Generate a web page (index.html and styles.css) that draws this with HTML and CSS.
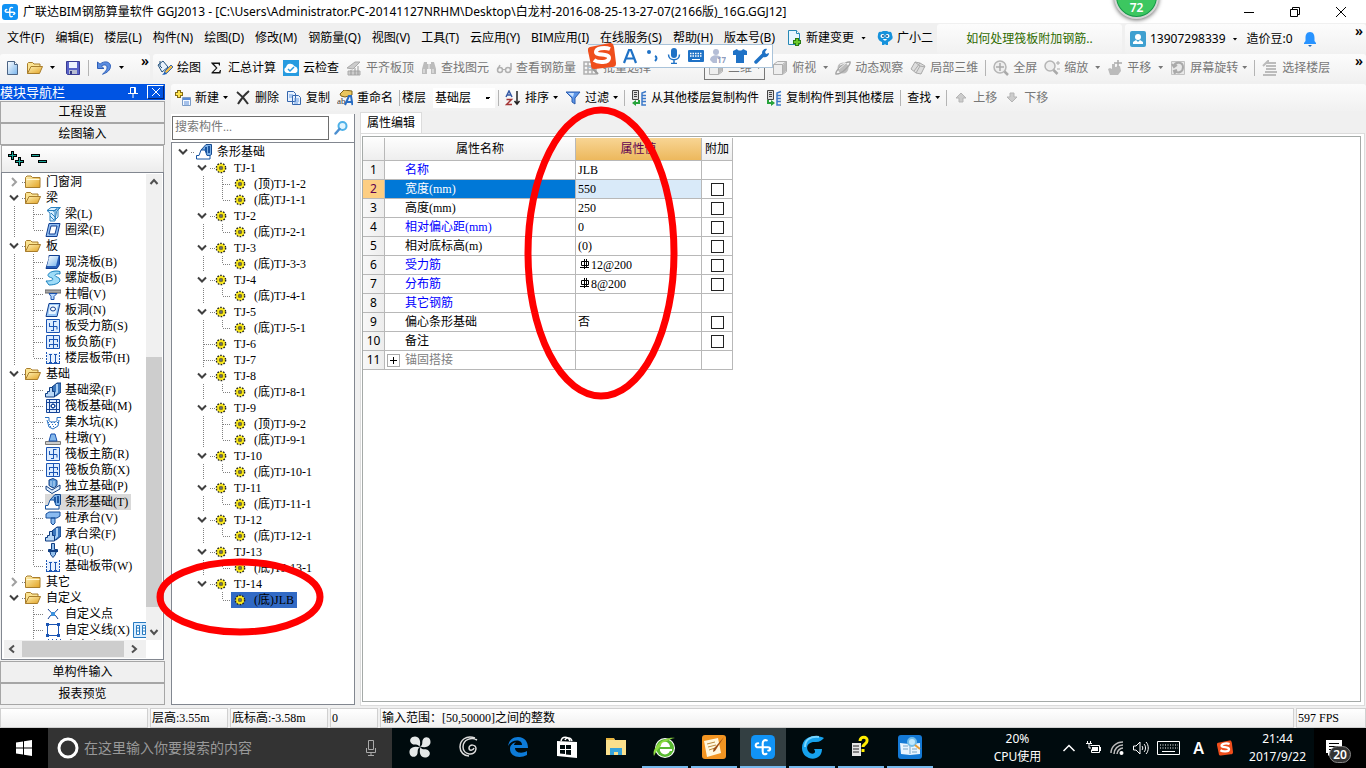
FILE: index.html
```html
<!DOCTYPE html>
<html lang="zh-CN">
<head>
<meta charset="utf-8">
<title>广联达BIM钢筋算量软件 GGJ2013</title>
<link rel="stylesheet" href="styles.css">
</head>
<body>
<svg class="defs" aria-hidden="true">
<defs>
<linearGradient id="gold" x1="0" y1="0" x2="1" y2="1"><stop offset="0" stop-color="#fff3b8"/><stop offset="1" stop-color="#e2a223"/></linearGradient>
<linearGradient id="blue" x1="0" y1="0" x2="1" y2="1"><stop offset="0" stop-color="#ffffff"/><stop offset="1" stop-color="#78b4ec"/></linearGradient>
<symbol id="chev" viewBox="0 0 12 16"><path d="M2 5.500l4 4 4-4" fill="none" stroke="#404040" stroke-width="2"/></symbol>
<symbol id="chevr" viewBox="0 0 12 16"><path d="M4 4l4 4-4 4" fill="none" stroke="#a0a0a0" stroke-width="2"/></symbol>
<symbol id="folder" viewBox="0 0 16 16"><path d="M.5 13.500v-10l1.500-1.500h4l1.500 1.500h7.500v10z" fill="url(#gold)" stroke="#a87d2c"/><path d="M1.500 5.500h13" stroke="#fff8d8"/></symbol>
<symbol id="open" viewBox="0 0 16 16"><path d="M.5 13.500v-10l1-1h4l1.500 1.500h6v3" fill="#fbe391" stroke="#a87d2c"/><path d="M.5 13.500l3.500-7h11.500l-3 7z" fill="url(#gold)" stroke="#a87d2c"/></symbol>
<symbol id="gear" viewBox="0 0 16 16"><circle cx="8" cy="8" r="4.600" fill="#ffee20" stroke="#222" stroke-width="1.500" stroke-dasharray="1.600 1.300"/><path d="M8 4v8M4 8h8M5 5l6 6M11 5l-6 6" stroke="#665c10" stroke-width=".7"/><circle cx="8" cy="8" r="3" fill="none" stroke="#ffee20" stroke-width="1.300"/><circle cx="8" cy="8" r="1.200" fill="#fff" stroke="#222"/></symbol>
<symbol id="beam" viewBox="0 0 16 16"><path d="M2 4.500l4-3h9.500l-4 4-1.500 9.500h-5v-8z" fill="#d8efff" stroke="#2b80bd"/><path d="M2 4.500h8.500l4-3M6 7l5 5M5 10l4 4M8 5.500l4-3M10 5v9l3-3v-7" fill="none" stroke="#2b80bd"/></symbol>
<symbol id="ring" viewBox="0 0 16 16"><path d="M4 1.500h11l-3 13h-11z" fill="#8ebcf0" stroke="#123f91"/><path d="M6 4h6l-2 8h-6z" fill="#fff" stroke="#123f91"/></symbol>
<symbol id="slab" viewBox="0 0 16 16"><path d="M4 1.500h10.500v9l-2.500 4h-11l3-10z" fill="#285eb8" stroke="#123f91"/><path d="M4.500 2h9l-2.500 10h-9z" fill="url(#blue)"/></symbol>
<symbol id="spiral" viewBox="0 0 16 16"><path d="M15 1.500c-5-1.500-12 .5-12 4 0 2 5 2 5 3.500s-4 2-7 2l3 4c6 0 11-2 11-5s-5-3-5-4.500 3-2 5-1.500z" fill="#9edcf8" stroke="#1980bd"/></symbol>
<symbol id="cap" viewBox="0 0 16 16"><path d="M0 4h16v3h-16z" fill="#aaa" stroke="#666"/><path d="M4 7.500h8l-3 3v3h-3v-3z" fill="#b9d8fc" stroke="#1750ae"/></symbol>
<symbol id="hole" viewBox="0 0 16 16"><path d="M4 1.500h11l-3 13h-11z" fill="#9bc9f7" stroke="#123f91"/><path d="M5 3h8l-2.500 9h-7z" fill="#e8f4ff"/><ellipse cx="8" cy="7" rx="2.500" ry="2" fill="#fff" stroke="#123f91"/></symbol>
<symbol id="bar1" viewBox="0 0 16 16"><path d="M1.500 1.500h13v13h-13z" fill="#dcecff" stroke="#1b55b4"/><path d="M8.500 3.500h3M8.500 3v10M4.500 5v3.500h7.500v3M4 8.500h4M6 12.500h3" fill="none" stroke="#1b55b4"/></symbol>
<symbol id="bar2" viewBox="0 0 16 16"><path d="M1.500 1.500h13v13h-13z" fill="#dcecff" stroke="#1b55b4"/><path d="M8.500 2v12M4 5.500h9M4 10.500h9M4.500 5v3M12.500 5v3M4.500 10v3M12.500 10v3" fill="none" stroke="#1b55b4"/></symbol>
<symbol id="strip" viewBox="0 0 16 16"><path d="M2 3h12v10h-12z" fill="#e8f2ff"/><path d="M1.500 2v11M14.500 2v11" stroke="#1b55b4" stroke-dasharray="2 1"/><path d="M1 13.500h14M5.500 4v9M10.500 4v9M4 4.500h3M9 4.500h3M4 12.500h3M9 12.500h3" stroke="#1b55b4"/></symbol>
<symbol id="fbeam" viewBox="0 0 16 16"><path d="M7 5l5-4h4v9l-5 4h-4z" fill="#3a76bd" stroke="#0c3b80"/><path d="M12 2v8l-4 4" fill="none" stroke="#a9d0f5" stroke-width="2"/><path d="M.5 15v-3.500h2v-2h2v-4h3v4h2v5.500z" fill="#bad8f6" stroke="#0c3b80"/></symbol>
<symbol id="strf" viewBox="0 0 16 16"><path d="M5 6l5-5.500h5.500v10l-3 2z" fill="#79aee6" stroke="#174a8e"/><path d="M10 3v6M13 2v7" stroke="#1c559f" stroke-width="2"/><path d="M.5 15v-3.500h2.500l2-5.500h4l2 5.500h3v3.500z" fill="#fff" stroke="#1553a0"/></symbol>
<symbol id="raft" viewBox="0 0 16 16"><path d="M1.500 1.500h13v13h-13z" fill="#e1eeff" stroke="#154497"/><path d="M4.500 1v14M11.500 1v14M1 4.500h14M1 11.500h14" stroke="#154497"/><path d="M6.500 6.500h3v3h-3zM8 4v2M8 10v2M4 8h2M10 8h2" fill="#fff" stroke="#154497"/></symbol>
<symbol id="pit" viewBox="0 0 16 16"><path d="M0 3.500h4v3c0 2 8 2 8 0v-3h4M2 6l2 7 4 2 5-3 1-6" fill="none" stroke="#2670c3"/><path d="M3 8.500h10M4 10.500h9M5 12.500h6" stroke="#2670c3" stroke-dasharray="1 2"/></symbol>
<symbol id="pier" viewBox="0 0 16 16"><path d="M.5 11.500h15v3h-15z" fill="#ccc" stroke="#777"/><path d="M4 11l2-7h4l2 7z" fill="#85b8eb" stroke="#1750ae"/></symbol>
<symbol id="ind" viewBox="0 0 16 16"><path d="M1 8l6 4 8-5v4l-8 4.500-6-4z" fill="#e2f0fd" stroke="#113f83"/><path d="M4 2l4-1.500 4 2v5l-4 2.500-4-2.500z" fill="#5c99d6" stroke="#113f83"/><path d="M6 3v5M9 3v6" stroke="#c5e0fa"/></symbol>
<symbol id="pcap" viewBox="0 0 16 16"><path d="M1 4l3-2h11v4l-3 2h-11zM6 8h4v5l-2 2-2-2z" fill="#8abbf0" stroke="#174e99"/></symbol>
<symbol id="pile" viewBox="0 0 16 16"><path d="M6.500 1.500h3v6h3v2l-2 1v2l-2.500 3-2.500-3v-2l-2-1v-2h3z" fill="#93bfea" stroke="#113f83"/><path d="M3 9h10" stroke="#113f83" stroke-width="2"/></symbol>
<symbol id="cross" viewBox="0 0 16 16"><path d="M3 3c2 4 8 5 10 10M13 3c-2 4-8 5-10 10" fill="none" stroke="#123f91"/><path d="M6 6h4v4h-4z" fill="#3c91de"/></symbol>
<symbol id="poly" viewBox="0 0 16 16"><path d="M2.500 2.500h11v11h-11z" fill="none" stroke="#1b55b4"/><path d="M1 1h3v3h-3zM12 1h3v3h-3zM1 12h3v3h-3zM12 12h3v3h-3z" fill="#1b55b4"/></symbol>
<symbol id="hatch" viewBox="0 0 16 16"><path d="M1 4l3-3M5 4l3-3M9 4l3-3M13 4l3-3M1 8l7-7M5 8l7-7" stroke="#1b55b4"/></symbol>
<symbol id="logo" viewBox="0 0 16 16"><rect width="16" height="16" rx="3" fill="#1193f5"/><path d="M10.500 3.600c-1.500-.6-2.700.2-2.700 1.900v5.500c0 1.700 1.200 2.200 2.500 1.500M4.800 5.500c-2 0-2.400 2.700 0 2.700h6.500c2 0 1.900 2.300.2 2.100" fill="none" stroke="#fff" stroke-width="1.400" stroke-linecap="round"/></symbol>
<symbol id="doc" viewBox="0 0 16 16"><path d="M3.500 1.500h7l3 3v10h-10z" fill="url(#blue)" stroke="#4b6485"/><path d="M10.500 1.500v3h3" fill="#fff" stroke="#4b6485"/></symbol>
<symbol id="save" viewBox="0 0 16 16"><path d="M1.500 1.500h13v13h-12l-1-1z" fill="#5862c8" stroke="#3a3c94"/><path d="M4 2h8v6h-8z" fill="#eef3ff"/><path d="M4 10h8v4h-8z" fill="#b7bdd2"/><path d="M5 11h2v3h-2z" fill="#333a82"/></symbol>
<symbol id="undo" viewBox="0 0 16 16"><path d="M1.500 2v6.500h6.500l-2.500-2.300c3-2.500 6-1 5.500 2-.3 2-1.700 3.500-4.500 6 5-1.500 8-4.500 8-8 0-4.500-6-6-10.500-2z" fill="#5b8ee2" stroke="#2e5fb8"/></symbol>
<symbol id="paint" viewBox="0 0 16 16"><path d="M1 5l5-4 5 6-6 5z" fill="#e8f2fc" stroke="#24527c"/><path d="M3 1v5l2 2" fill="none" stroke="#24527c"/><path d="M7 14l1-3 6-6 2 2-6 6z" fill="#f2bd45" stroke="#3a69b0"/><path d="M5 15l3-3 2 2z" fill="#1660bd"/></symbol>
<symbol id="sigma" viewBox="0 0 16 16"><path d="M3 2.500h9v3h-1l-.5-1.500h-4.500l3.500 4-4 4h5.500l1-2h1l-.5 3.500h-9v-1l4.500-4.500-4.500-4.500z" fill="#111"/></symbol>
<symbol id="cloud" viewBox="0 0 16 16"><path d="M0 0h16v16h-16z" fill="#269be0"/><path d="M4 13a3 3 0 0 1-1-5.700 4.500 4.500 0 0 1 8.500-1 3.500 3.500 0 0 1 1 6.700z" fill="#fff"/><path d="M5 9l2 2 4-4" fill="none" stroke="#269be0" stroke-width="1.500"/></symbol>
<symbol id="galign" viewBox="0 0 16 16"><path d="M1 8l8-6h5l-7 7zM2 11h12v4h-12z" fill="#ccc" stroke="#aaa"/><path d="M5 10v5M9 8v7M12 6v9" stroke="#999"/></symbol>
<symbol id="gbin" viewBox="0 0 16 16"><path d="M3 2h3v2h4v-2h3l2 7v5h-5v-5h-4v5h-5v-5z" fill="#bcbcbc"/><path d="M3 9v4M12 9v4M8 4v5" stroke="#f0f0f0"/></symbol>
<symbol id="gglass" viewBox="0 0 16 16"><path d="M4 5l-2.500 4.500M15 3v7" stroke="#b0b0b0" stroke-width="1.500"/><circle cx="4" cy="10" r="2.500" fill="none" stroke="#b0b0b0" stroke-width="1.500"/><circle cx="12" cy="10" r="2.500" fill="none" stroke="#b0b0b0" stroke-width="1.500"/><path d="M6.500 9.500h3" stroke="#b0b0b0"/></symbol>
<symbol id="ggrid" viewBox="0 0 16 16"><path d="M1 2h12v12h-12zM1 6h12M1 10h12M5 2v12M9 2v12" fill="none" stroke="#b0b0b0" stroke-width="1.500"/><path d="M9 8l6 6" stroke="#999" stroke-width="2"/></symbol>
<symbol id="gcube" viewBox="0 0 16 16"><path d="M1.500 4.500l4-3h9v10l-4 3h-9zM1.500 4.500h9v10M10.500 4.500l4-3" fill="#eee" stroke="#b0b0b0"/><path d="M11 5l3-3v9l-3 3z" fill="#bbb"/></symbol>
<symbol id="gorb" viewBox="0 0 16 16"><circle cx="8" cy="8" r="5.500" fill="#bdbdbd"/><path d="M1 14c-1-3 9-13 14-12 1 3-9 13-14 12z" fill="none" stroke="#a5a5a5" stroke-width="1.500"/><path d="M5 5l5-2M4 9l7-6" stroke="#eee"/></symbol>
<symbol id="gpart" viewBox="0 0 16 16"><path d="M1 9l4-7 5 1 5 3-4 8-5-1zM5 2l5 4-4 7M10 3l-6 8M10 6l5 1" fill="#ddd" stroke="#aaa"/></symbol>
<symbol id="gfull" viewBox="0 0 16 16"><circle cx="7" cy="7" r="6" fill="#eee" stroke="#b5b5b5" stroke-width="1.500"/><path d="M7 3v8M3 7h8" fill="none" stroke="#aaa" stroke-width="1.500"/><path d="M11.500 11.500l3.500 3.500" stroke="#aaa" stroke-width="2.500"/></symbol>
<symbol id="gzoom" viewBox="0 0 16 16"><circle cx="6" cy="6" r="5" fill="#eee" stroke="#b5b5b5" stroke-width="1.500"/><path d="M9.500 10l4 4" stroke="#aaa" stroke-width="2.500"/><path d="M12 3h4M14 1v4M13 9h3" stroke="#aaa"/></symbol>
<symbol id="gpan" viewBox="0 0 16 16"><path d="M3 15l-2-6 2-1 2 1v-5h3v3l5-1 1 5-3 4z" fill="#bbb"/><path d="M11 0v7M7 3h8" stroke="#aaa" stroke-width="1.500"/></symbol>
<symbol id="grot" viewBox="0 0 16 16"><path d="M1.500 1.500h13v13h-13z" fill="#e8e8e8" stroke="#c2c2c2"/><path d="M4 6c1-5 9-4 9 1s-5 7-8 4M2 4l2 3 3-2M7 10l-3 1 1 3" fill="none" stroke="#aaa" stroke-width="2"/></symbol>
<symbol id="glay" viewBox="0 0 16 16"><path d="M1 6l5-5v2h8M4 6h10M4 9h10M3 12h12M1 15h13" fill="none" stroke="#bcbcbc" stroke-width="2"/></symbol>
<symbol id="new" viewBox="0 0 16 16"><path d="M4 0v8M0 4h8" stroke="#846c17" stroke-width="4"/><path d="M4 1v6M1 4h6" stroke="#ffe44f" stroke-width="2"/><path d="M7.500 7.500h8v8h-8z" fill="#f6faff" stroke="#7c9cc7"/><path d="M8 8h7v2h-7z" fill="#5588d5"/><path d="M9 12h5M9 14h5" stroke="#5588d5"/></symbol>
<symbol id="del" viewBox="0 0 16 16"><path d="M2 2c4 3 7 6 11 12M14 1c-5 4-8 8-11 13" fill="none" stroke="#333" stroke-width="2"/></symbol>
<symbol id="copy" viewBox="0 0 16 16"><path d="M1.500 1.500h6l2 2v8h-8zM6.500 5.500h6l2 2v7h-8z" fill="#e8f2ff" stroke="#3566ad"/><path d="M3 5h4M3 7h3M8 9h5M8 11h5M8 13h4" stroke="#6b9de0"/></symbol>
<symbol id="ren" viewBox="0 0 16 16"><path d="M3 4l4-4 8 1v4l-7 2-4-1z" fill="#e9c65d" stroke="#7b6018"/><text x="0" y="14" font-family="Liberation Serif" font-size="9" fill="#333">ab</text><path d="M8 15l4-9h2l1.500 9M10 12h5" fill="none" stroke="#286cc2" stroke-width="2"/></symbol>
<symbol id="sort" viewBox="0 0 16 16"><path d="M1 7l3-6 3 6M2 5h4" fill="none" stroke="#3459a5" stroke-width="1.500"/><path d="M1.500 9.500h5l-5 5h5.500" fill="none" stroke="#a43434" stroke-width="1.500"/><path d="M12 1v13M9.500 11l2.500 3 2.500-3" fill="none" stroke="#222" stroke-width="1.500"/></symbol>
<symbol id="filter" viewBox="0 0 16 16"><path d="M1 2h14l-5 6v6l-3-2v-4z" fill="#5b95e8" stroke="#2c5cad"/><path d="M3 3h6l-1 4z" fill="#c9e2ff"/></symbol>
<symbol id="cpf" viewBox="0 0 16 16"><path d="M1.500.500h6v9h-6z" fill="#ddd" stroke="#444"/><path d="M3 2.500h3M3 4.500h3M3 6.500h3" stroke="#444"/><path d="M7 10v2h-2v-2l-4 3 4 3v-2h4v-4z" fill="#26a33a"/><path d="M15 1.500l-4 1.500v12h4M11 5.500h4M11 8.500h4M11 11.500h4" fill="none" stroke="#3c79c9" stroke-width="1.500"/></symbol>
<symbol id="cpt" viewBox="0 0 16 16"><path d="M1.500.500h6v9h-6z" fill="#ddd" stroke="#444"/><path d="M3 2.500h3M3 4.500h3M3 6.500h3" stroke="#444"/><path d="M1 10v4h4v2l4-3-4-3v2h-2v-2z" fill="#26a33a"/><path d="M15 1.500l-4 1.500v12h4M11 5.500h4M11 8.500h4M11 11.500h4" fill="none" stroke="#3c79c9" stroke-width="1.500"/></symbol>
<symbol id="up" viewBox="0 0 16 16"><path d="M8 3l5 5h-3v4h-4v-4h-3z" fill="#ccc" stroke="#b5b5b5"/></symbol>
<symbol id="down" viewBox="0 0 16 16"><path d="M8 12l5-5h-3v-4h-4v4h-3z" fill="#ccc" stroke="#b5b5b5"/></symbol>
<symbol id="chg" viewBox="0 0 16 16"><path d="M2.500.5h8l3 3v11h-11z" fill="#e7f6ff" stroke="#2688b5"/><path d="M10.500.5v3h3" fill="#fff" stroke="#2688b5"/><path d="M11 8v8M7 12h8" stroke="#297914" stroke-width="4"/><path d="M11 9v6M8 12h6" stroke="#6ccb2c" stroke-width="2"/></symbol>
<symbol id="mascot" viewBox="0 0 16 16"><path d="M1 5c0-2 1-4 3-3l2-1h4l2 1c2-1 3 1 3 3 1 2 1 4-1 5-1 1-2 1.500-3 2v3h-2l-1-1-1 1h-2v-3c-3-1-5-4-4-7z" fill="#1692dc"/><circle cx="5.500" cy="6" r="2" fill="#fff"/><circle cx="10.500" cy="6" r="2" fill="#fff"/><circle cx="6" cy="6" r="1" fill="#124b83"/><circle cx="10" cy="6" r="1" fill="#124b83"/><path d="M6 9c1 2 3 2 4 0z" fill="#fff"/></symbol>
<symbol id="user" viewBox="0 0 16 16"><rect width="16" height="16" rx="2" fill="#3fa0d0"/><circle cx="8" cy="6" r="3" fill="#fff"/><path d="M3 13v-2l3-2 2 2 2-2 3 2v2z" fill="#fff"/></symbol>
<symbol id="bell" viewBox="0 0 16 16"><path d="M8 1c3.500 0 4.500 3 4.500 6v3l1.500 2v1h-12v-1l1.500-2v-3c0-3 1-6 4.500-6z" fill="#2893ff"/><path d="M6 14h4l-2 2z" fill="#2368b5"/></symbol>
<symbol id="mag" viewBox="0 0 16 16"><circle cx="9.500" cy="6" r="4" fill="#e0f5ff" stroke="#4eb1e8" stroke-width="2"/><path d="M6.500 9l-4 4.500" stroke="#4c8fd0" stroke-width="2.500" stroke-linecap="round"/></symbol>
<symbol id="sogou" viewBox="0 0 28 28"><path d="M2 5l20-4c3 0 3 1 4 4l2 16c0 3-1 4-4 4l-17 2c-3 0-4-1-4-4l-3-14c0-3 0-3 2-4z" fill="#ef4e1c"/><path d="M22 7c-5-2-14-1-14 3s13 1 13 6-11 5-15 2" fill="none" stroke="#fff" stroke-width="4"/></symbol>
</defs>
</svg>

<header class="titlebar">
  <svg class="i16"><use href="#logo"/></svg>
  <h1>广联达BIM钢筋算量软件 GGJ2013 - [C:\Users\Administrator.PC-20141127NRHM\Desktop\白龙村-2016-08-25-13-27-07(2166版)_16G.GGJ12]</h1>
  <div class="winbtns">
    <button aria-label="最小化"><svg class="i12" viewBox="0 0 12 12"><path d="M1 6.500h10" stroke="#000"/></svg></button>
    <button aria-label="还原"><svg class="i12" viewBox="0 0 12 12"><path d="M1.500 3.500h7v7h-7zM3.500 3v-1.500h7v7h-2" fill="none" stroke="#000"/></svg></button>
    <button aria-label="关闭"><svg class="i12" viewBox="0 0 12 12"><path d="M1 1l10 10M11 1l-10 10" stroke="#000"/></svg></button>
  </div>
</header>

<nav class="menubar">
  <div class="menus">
    <button>文件(F)</button><button>编辑(E)</button><button>楼层(L)</button><button>构件(N)</button><button>绘图(D)</button><button>修改(M)</button><button>钢筋量(Q)</button><button>视图(V)</button><button>工具(T)</button><button>云应用(Y)</button><button>BIM应用(I)</button><button>在线服务(S)</button><button>帮助(H)</button><button>版本号(B)</button>
    <button class="tool"><svg class="i16"><use href="#chg"/></svg>新建变更<i class="dd gapped"></i></button>
    <button class="tool"><svg class="i16"><use href="#mascot"/></svg>广小二</button>
  </div>
  <div class="band tip"><a href="#">如何处理筏板附加钢筋..</a></div>
  <div class="band account">
    <button class="tool"><svg class="i16"><use href="#user"/></svg>13907298339<i class="dd gapped"></i></button>
    <span>造价豆:0</span>
    <button class="tool" aria-label="通知"><svg class="i16"><use href="#bell"/></svg></button>
    <b class="more">»</b>
  </div>
</nav>

<div class="toolrow">
  <div class="band quick">
    <button class="tool" aria-label="新建"><svg class="i16"><use href="#doc"/></svg></button>
    <button class="tool" aria-label="打开"><svg class="i16"><use href="#open"/></svg><i class="dd wide"></i></button>
    <button class="tool" aria-label="保存"><svg class="i16"><use href="#save"/></svg></button>
    <i class="sep"></i>
    <button class="tool" aria-label="撤销"><svg class="i16"><use href="#undo"/></svg><i class="dd wide"></i></button>
    <b class="more">»</b>
  </div>
  <div class="band maintools">
    <button class="tool"><svg class="i16"><use href="#paint"/></svg>绘图</button>
    <button class="tool"><svg class="i16"><use href="#sigma"/></svg>汇总计算</button>
    <button class="tool"><svg class="i16"><use href="#cloud"/></svg>云检查</button>
    <button class="tool off"><svg class="i16"><use href="#galign"/></svg>平齐板顶</button>
    <button class="tool off"><svg class="i16"><use href="#gbin"/></svg>查找图元</button>
    <button class="tool off"><svg class="i16"><use href="#gglass"/></svg>查看钢筋量</button>
    <button class="tool off"><svg class="i16"><use href="#ggrid"/></svg>批量选择</button>
    <button class="tool off view3d"><svg class="i16"><use href="#gcube"/></svg>三维<i class="dd"></i></button>
    <button class="tool off"><svg class="i16"><use href="#gcube"/></svg>俯视<i class="dd gapped"></i></button>
    <button class="tool off"><svg class="i16"><use href="#gorb"/></svg>动态观察</button>
    <button class="tool off"><svg class="i16"><use href="#gpart"/></svg>局部三维</button>
    <i class="sep"></i>
    <button class="tool off"><svg class="i16"><use href="#gfull"/></svg>全屏</button>
    <button class="tool off"><svg class="i16"><use href="#gzoom"/></svg>缩放<i class="dd gapped"></i></button>
    <button class="tool off"><svg class="i16"><use href="#gpan"/></svg>平移<i class="dd gapped"></i></button>
    <button class="tool off"><svg class="i16"><use href="#grot"/></svg>屏幕旋转<i class="dd"></i></button>
    <i class="sep"></i>
    <button class="tool off"><svg class="i16"><use href="#glay"/></svg>选择楼层</button>
    <b class="more">»</b>
  </div>
</div>

<div class="work">
  <aside class="modules">
    <h2><span>模块导航栏</span><svg class="i12" viewBox="0 0 12 12"><path d="M3.500 7v-5.500h5v5.500M1 7.500h10M6 8v4M7.500 2v5" fill="none" stroke="#fff"/></svg><button aria-label="关闭"><svg class="i12" viewBox="0 0 12 12"><path d="M2 2l8 8M10 2l-8 8" stroke="#fff"/></svg></button></h2>
    <button class="section">工程设置</button>
    <button class="section">绘图输入</button>
    <div class="expand">
      <button aria-label="全部展开"><svg class="i16" viewBox="0 0 16 16"><path d="M4.500 0v9M0 4.500h9M11.500 6v9M7 10.500h9" stroke="#000" stroke-width="3"/><path d="M4.500 1v7M1 4.500h7M11.500 7v7M8 10.500h7" stroke="#1aa79a"/></svg></button>
      <button aria-label="全部折叠"><svg class="i16" viewBox="0 0 16 16"><path d="M0 4.500h9M7 10.500h9" stroke="#000" stroke-width="3"/><path d="M1 4.500h7M8 10.500h7" stroke="#1aa79a"/></svg></button>
    </div>
    <div class="treebox">
      <ul class="tree mod">
        <li class="dir"><svg class="c"><use href="#chevr"/></svg><svg class="i16"><use href="#folder"/></svg>门窗洞</li>
        <li class="dir"><svg class="c"><use href="#chev"/></svg><svg class="i16"><use href="#open"/></svg>梁</li>
        <li class="leaf"><span><svg class="i16"><use href="#beam"/></svg>梁(L)</span></li>
        <li class="leaf end"><span><svg class="i16"><use href="#ring"/></svg>圈梁(E)</span></li>
        <li class="dir"><svg class="c"><use href="#chev"/></svg><svg class="i16"><use href="#open"/></svg>板</li>
        <li class="leaf"><span><svg class="i16"><use href="#slab"/></svg>现浇板(B)</span></li>
        <li class="leaf"><span><svg class="i16"><use href="#spiral"/></svg>螺旋板(B)</span></li>
        <li class="leaf"><span><svg class="i16"><use href="#cap"/></svg>柱帽(V)</span></li>
        <li class="leaf"><span><svg class="i16"><use href="#hole"/></svg>板洞(N)</span></li>
        <li class="leaf"><span><svg class="i16"><use href="#bar1"/></svg>板受力筋(S)</span></li>
        <li class="leaf"><span><svg class="i16"><use href="#bar2"/></svg>板负筋(F)</span></li>
        <li class="leaf end"><span><svg class="i16"><use href="#strip"/></svg>楼层板带(H)</span></li>
        <li class="dir"><svg class="c"><use href="#chev"/></svg><svg class="i16"><use href="#open"/></svg>基础</li>
        <li class="leaf"><span><svg class="i16"><use href="#fbeam"/></svg>基础梁(F)</span></li>
        <li class="leaf"><span><svg class="i16"><use href="#raft"/></svg>筏板基础(M)</span></li>
        <li class="leaf"><span><svg class="i16"><use href="#pit"/></svg>集水坑(K)</span></li>
        <li class="leaf"><span><svg class="i16"><use href="#pier"/></svg>柱墩(Y)</span></li>
        <li class="leaf"><span><svg class="i16"><use href="#bar1"/></svg>筏板主筋(R)</span></li>
        <li class="leaf"><span><svg class="i16"><use href="#bar2"/></svg>筏板负筋(X)</span></li>
        <li class="leaf"><span><svg class="i16"><use href="#ind"/></svg>独立基础(P)</span></li>
        <li class="leaf"><span class="current"><svg class="i16"><use href="#strf"/></svg>条形基础(T)</span></li>
        <li class="leaf"><span><svg class="i16"><use href="#pcap"/></svg>桩承台(V)</span></li>
        <li class="leaf"><span><svg class="i16"><use href="#fbeam"/></svg>承台梁(F)</span></li>
        <li class="leaf"><span><svg class="i16"><use href="#pile"/></svg>桩(U)</span></li>
        <li class="leaf end"><span><svg class="i16"><use href="#strip"/></svg>基础板带(W)</span></li>
        <li class="dir"><svg class="c"><use href="#chevr"/></svg><svg class="i16"><use href="#folder"/></svg>其它</li>
        <li class="dir"><svg class="c"><use href="#chev"/></svg><svg class="i16"><use href="#open"/></svg>自定义</li>
        <li class="leaf last"><span><svg class="i16"><use href="#cross"/></svg>自定义点</span></li>
        <li class="leaf last"><span><svg class="i16"><use href="#poly"/></svg>自定义线(X)</span><svg class="i16" viewBox="0 0 16 16"><path d="M.5.500h15v15h-15z" fill="#d7ecff" stroke="#277ac1"/><path d="M3.500 3.500h3v9h-3zM9.500 3.500h3v9h-3zM3 6h4M9 6h4M3 9h4M9 9h4" fill="#fff" stroke="#277ac1"/></svg></li>
        <li class="leaf last"><span><svg class="i16"><use href="#hatch"/></svg>自定义面</span></li>
      </ul>
      <div class="vbar"><svg class="i16" viewBox="0 0 16 16"><path d="M4.500 10l3.500-4 3.500 4" fill="none" stroke="#505050" stroke-width="2"/></svg><i></i><svg class="i16" viewBox="0 0 16 16"><path d="M4.500 6l3.500 4 3.500-4" fill="none" stroke="#505050" stroke-width="2"/></svg></div>
      <div class="hbar"><svg class="i16" viewBox="0 0 16 16"><path d="M10 4.500l-4 3.500 4 3.500" fill="none" stroke="#505050" stroke-width="2"/></svg><i></i><svg class="i16" viewBox="0 0 16 16"><path d="M6 4.500l4 3.500-4 3.500" fill="none" stroke="#505050" stroke-width="2"/></svg></div>
    </div>
    <button class="section">单构件输入</button>
    <button class="section">报表预览</button>
  </aside>

  <main>
    <div class="band edittools">
      <button class="tool"><svg class="i16"><use href="#new"/></svg>新建<i class="dd"></i></button>
      <button class="tool"><svg class="i16"><use href="#del"/></svg>删除</button>
      <button class="tool"><svg class="i16"><use href="#copy"/></svg>复制</button>
      <button class="tool"><svg class="i16"><use href="#ren"/></svg>重命名</button>
      <i class="sep"></i>
      <label for="floor">楼层</label>
      <select id="floor"><option>基础层</option></select>
      <i class="sep"></i>
      <button class="tool"><svg class="i16"><use href="#sort"/></svg>排序<i class="dd"></i></button>
      <button class="tool"><svg class="i16"><use href="#filter"/></svg>过滤<i class="dd"></i></button>
      <i class="sep"></i>
      <button class="tool"><svg class="i16"><use href="#cpf"/></svg>从其他楼层复制构件</button>
      <button class="tool"><svg class="i16"><use href="#cpt"/></svg>复制构件到其他楼层</button>
      <i class="sep"></i>
      <button class="tool">查找<i class="dd"></i></button>
      <i class="sep"></i>
      <button class="tool off"><svg class="i16"><use href="#up"/></svg>上移</button>
      <button class="tool off"><svg class="i16"><use href="#down"/></svg>下移</button>
    </div>
    <div class="panes">
      <section class="components">
        <div class="search"><input type="text" aria-label="搜索构件" placeholder="搜索构件..."><button aria-label="搜索"><svg class="i16"><use href="#mag"/></svg></button></div>
        <ul class="tree comp">
          <li class="root"><svg class="c"><use href="#chev"/></svg><svg class="i16"><use href="#strf"/></svg>条形基础</li>
          <li class="dir"><svg class="c"><use href="#chev"/></svg><svg class="i16"><use href="#gear"/></svg>TJ-1</li>
          <li class="leaf"><span><svg class="i16"><use href="#gear"/></svg>(顶)TJ-1-2</span></li>
          <li class="leaf end"><span><svg class="i16"><use href="#gear"/></svg>(底)TJ-1-1</span></li>
          <li class="dir"><svg class="c"><use href="#chev"/></svg><svg class="i16"><use href="#gear"/></svg>TJ-2</li>
          <li class="leaf end"><span><svg class="i16"><use href="#gear"/></svg>(底)TJ-2-1</span></li>
          <li class="dir"><svg class="c"><use href="#chev"/></svg><svg class="i16"><use href="#gear"/></svg>TJ-3</li>
          <li class="leaf end"><span><svg class="i16"><use href="#gear"/></svg>(底)TJ-3-3</span></li>
          <li class="dir"><svg class="c"><use href="#chev"/></svg><svg class="i16"><use href="#gear"/></svg>TJ-4</li>
          <li class="leaf end"><span><svg class="i16"><use href="#gear"/></svg>(底)TJ-4-1</span></li>
          <li class="dir"><svg class="c"><use href="#chev"/></svg><svg class="i16"><use href="#gear"/></svg>TJ-5</li>
          <li class="leaf end"><span><svg class="i16"><use href="#gear"/></svg>(底)TJ-5-1</span></li>
          <li class="dir bare"><svg class="c"></svg><svg class="i16"><use href="#gear"/></svg>TJ-6</li>
          <li class="dir bare"><svg class="c"></svg><svg class="i16"><use href="#gear"/></svg>TJ-7</li>
          <li class="dir"><svg class="c"><use href="#chev"/></svg><svg class="i16"><use href="#gear"/></svg>TJ-8</li>
          <li class="leaf end"><span><svg class="i16"><use href="#gear"/></svg>(底)TJ-8-1</span></li>
          <li class="dir"><svg class="c"><use href="#chev"/></svg><svg class="i16"><use href="#gear"/></svg>TJ-9</li>
          <li class="leaf"><span><svg class="i16"><use href="#gear"/></svg>(顶)TJ-9-2</span></li>
          <li class="leaf end"><span><svg class="i16"><use href="#gear"/></svg>(底)TJ-9-1</span></li>
          <li class="dir"><svg class="c"><use href="#chev"/></svg><svg class="i16"><use href="#gear"/></svg>TJ-10</li>
          <li class="leaf end"><span><svg class="i16"><use href="#gear"/></svg>(底)TJ-10-1</span></li>
          <li class="dir"><svg class="c"><use href="#chev"/></svg><svg class="i16"><use href="#gear"/></svg>TJ-11</li>
          <li class="leaf end"><span><svg class="i16"><use href="#gear"/></svg>(底)TJ-11-1</span></li>
          <li class="dir"><svg class="c"><use href="#chev"/></svg><svg class="i16"><use href="#gear"/></svg>TJ-12</li>
          <li class="leaf end"><span><svg class="i16"><use href="#gear"/></svg>(底)TJ-12-1</span></li>
          <li class="dir"><svg class="c"><use href="#chev"/></svg><svg class="i16"><use href="#gear"/></svg>TJ-13</li>
          <li class="leaf end"><span><svg class="i16"><use href="#gear"/></svg>(底)TJ-13-1</span></li>
          <li class="dir"><svg class="c"><use href="#chev"/></svg><svg class="i16"><use href="#gear"/></svg>TJ-14</li>
          <li class="leaf end last"><span class="selected"><svg class="i16"><use href="#gear"/></svg>(底)JLB</span></li>
        </ul>
      </section>
      <section class="props">
        <button class="tab">属性编辑</button>
        <div class="sheet"><div class="inner">
          <table>
            <colgroup><col class="cn"><col class="ca"><col class="cv"><col class="cx"></colgroup>
            <thead><tr><th></th><th>属性名称</th><th class="hot">属性值</th><th>附加</th></tr></thead>
            <tbody>
              <tr><th>1</th><td class="name key">名称</td><td>JLB</td><td></td></tr>
              <tr class="active"><th>2</th><td class="name">宽度(mm)</td><td>550</td><td class="ck"><input type="checkbox" aria-label="宽度附加"></td></tr>
              <tr><th>3</th><td class="name">高度(mm)</td><td>250</td><td class="ck"><input type="checkbox" aria-label="高度附加"></td></tr>
              <tr><th>4</th><td class="name key">相对偏心距(mm)</td><td>0</td><td class="ck"><input type="checkbox" aria-label="相对偏心距附加"></td></tr>
              <tr><th>5</th><td class="name">相对底标高(m)</td><td>(0)</td><td class="ck"><input type="checkbox" aria-label="相对底标高附加"></td></tr>
              <tr><th>6</th><td class="name key">受力筋</td><td><svg class="rebar" viewBox="0 0 10 10"><path d="M1.500 2.500h7v4h-7zM4.500 0v10M6.500 0v9M0 8.500h9" fill="none" stroke="#000"/></svg>12@200</td><td class="ck"><input type="checkbox" aria-label="受力筋附加"></td></tr>
              <tr><th>7</th><td class="name key">分布筋</td><td><svg class="rebar" viewBox="0 0 10 10"><path d="M1.500 2.500h7v4h-7zM4.500 0v10M6.500 0v9M0 8.500h9" fill="none" stroke="#000"/></svg>8@200</td><td class="ck"><input type="checkbox" aria-label="分布筋附加"></td></tr>
              <tr><th>8</th><td class="name key">其它钢筋</td><td></td><td></td></tr>
              <tr><th>9</th><td class="name">偏心条形基础</td><td>否</td><td class="ck"><input type="checkbox" aria-label="偏心条形基础附加"></td></tr>
              <tr><th>10</th><td class="name">备注</td><td></td><td class="ck"><input type="checkbox" aria-label="备注附加"></td></tr>
              <tr><th>11</th><td class="name group"><button aria-label="展开"><svg viewBox="0 0 11 11"><path d="M2 5.500h7M5.500 2v7" stroke="#000"/></svg></button>锚固搭接</td><td></td><td></td></tr>
            </tbody>
          </table>
        </div></div>
      </section>
    </div>
  </main>
</div>

<footer class="status"><span></span><span>层高:3.55m</span><span>底标高:-3.58m</span><span>0</span><span>输入范围：[50,50000]之间的整数</span><span>597 FPS</span></footer>

<div class="taskbar">
  <button class="start" aria-label="开始"><svg class="i16" viewBox="0 0 16 16"><path d="M0 2.500l7-1v6h-7zM8 1.300l8-1.300v7.500h-8zM0 8.500h7v6l-7-1zM8 8.500h8v7.500l-8-1.300z" fill="#fff"/></svg></button>
  <div class="cortana"><svg class="i22" viewBox="0 0 22 22"><circle cx="11" cy="11" r="9" fill="none" stroke="#fff" stroke-width="3"/></svg><input type="text" aria-label="搜索" placeholder="在这里输入你要搜索的内容"><svg class="i16" viewBox="0 0 16 16"><path d="M5.500.500h5v9h-5zM3.500 8v4.500h9v-4.500M8 13v2.500M5 15.500h6" fill="none" stroke="#aaa"/></svg></div>
  <div class="apps">
    <button aria-label="浏览器"><svg viewBox="0 0 24 24"><g fill="#e4e8e8"><path id="petal" d="M11.500 12c-1-3-4-2-6-2.500-4-1-4.500-6-1-7.500 5-2 9.500 2 7 10z"/><use href="#petal" transform="rotate(90 12 12)"/><use href="#petal" transform="rotate(180 12 12)"/><use href="#petal" transform="rotate(270 12 12)"/></g></svg></button>
    <button aria-label="广联达"><svg viewBox="0 0 24 24"><path d="M20 5c-5-3-14-1-14 7 0 8 12 10 13 2 0-5-7-5-7-1 0 3 4 3 5 0M18 3c-9-3-15 2-15 9 0 5 4 9 9 9" fill="none" stroke="#ddd" stroke-width="1.500"/></svg></button>
    <button aria-label="Edge"><svg viewBox="0 0 24 24"><path d="M2 11c1-6 5-9 10-9 7 0 10 5 10 11h-13c0 5 7 6 12 3v4c-7 4-17 2-17-6 0-4 3-6 6-7-1 1-2 2-2 3h8c0-6-10-6-14 1z" fill="#0d7bd8"/></svg></button>
    <button aria-label="应用商店"><svg viewBox="0 0 24 24"><path d="M2 6l20 1v16l-20-2z" fill="#fff"/><path d="M6 6c1-5 7-5 9 0M10 5c1-3 6-3 7 1" fill="none" stroke="#fff" stroke-width="1.500"/><path d="M5 10h5v4h-5zM11 10h5v4h-5zM5 15h5v4l-5-.500zM11 15h5v5l-5-.500z" fill="#000b0e"/></svg></button>
    <button aria-label="文件资源管理器"><svg viewBox="0 0 24 24"><path d="M2 3h8l1 2h11v15h-20z" fill="#fbe08c"/><path d="M2 3h8v2h-8z" fill="#e8b540"/><path d="M6 20v-7h12v7h-4v-3h-4v3z" fill="#36a3db"/></svg></button>
    <button class="run" aria-label="360浏览器"><svg viewBox="0 0 24 24"><circle cx="12" cy="13" r="10" fill="#fff"/><circle cx="12" cy="13" r="9" fill="#59b932"/><path d="M7 12a5 5 0 0 1 10 0zM7 14.500h10a5 5 0 0 1-10 0z" fill="#fff"/><path d="M1 21c-3-8 10-20 21-18-7 1-16 7-21 18z" fill="#8edb42"/><path d="M8 11a4 4 0 0 1 8 0zM7 14h12v2h-12z" fill="#fff"/></svg></button>
    <button class="run" aria-label="记事"><svg viewBox="0 0 24 24"><rect width="24" height="24" rx="3" fill="#f29522"/><path d="M2 6l14-3 3 15-14 4z" fill="#fff8df"/><path d="M5 9l8-2M6 12l8-2M7 15l6-2" stroke="#bb893e"/><path d="M22 2l-9 14-2 1 .500-3z" fill="#9c4c15"/></svg></button>
    <button class="run on" aria-label="广联达BIM钢筋算量"><svg viewBox="0 0 16 16"><use href="#logo"/></svg></button>
    <button class="run" aria-label="广联达G"><svg viewBox="0 0 24 24"><path d="M24 3c-5-3-22-4-22 10 0 13 20 15 20 1h-8c3 4-1 6-4 4-6-5-2-12 6-11 4 0 6-2 8-4z" fill="#16a2ed"/><path d="M19 2c-9-1-14 3-14 10" fill="none" stroke="#77d5ff" stroke-width="2"/></svg></button>
    <button class="run" aria-label="帮助"><svg viewBox="0 0 24 24"><path d="M3 8h9v13h-9z" fill="#e5e5e5"/><path d="M4 11h6M4 14h6M4 17h6" stroke="#222"/><path d="M11 6c0-5 8-5 7 0 0 3-4 3-4 6M14 14v3" fill="none" stroke="#ffed00" stroke-width="3"/></svg></button>
    <button class="run" aria-label="图集"><svg viewBox="0 0 24 24"><rect width="24" height="24" rx="3" fill="#1479d5"/><path d="M2 8l9 1 11-1v11l-10 1-9-1z" fill="#e9f5ff"/><path d="M12 9v10M5 11h5M5 14h5M14 14h5M14 17h5" stroke="#78a5c7"/><circle cx="14" cy="7" r="4" fill="#c0e8ff" stroke="#72bde9" stroke-width="2"/><path d="M17 10l5 4" stroke="#e59b36" stroke-width="2"/></svg></button>
  </div>
  <div class="tray">
    <div class="cpu">20%<br>CPU使用</div>
    <svg class="i16" viewBox="0 0 16 16"><path d="M2.500 11l5.500-5.500 5.500 5.500" fill="none" stroke="#fff" stroke-width="1.500"/></svg>
    <svg class="i16" viewBox="0 0 16 16"><path d="M5.500 5.500h9v7h-8v-3M15.500 7v4M1 3.500h6M2.500 1v3M5.500 1v3M4 4v4h2" fill="none" stroke="#fff"/><path d="M7 7h6v4h-6z" fill="#fff"/></svg>
    <svg class="i16" viewBox="0 0 16 16"><path d="M2 13c0-6 5-11 12-11M5 14c0-5 4-9 9-9M8 14c0-3 3-6 6-6" fill="none" stroke="#bbb" stroke-width="1.500"/><circle cx="12.500" cy="13" r="2" fill="#fff"/></svg>
    <svg class="i16" viewBox="0 0 16 16"><path d="M.5 6h2.500l4-4v12l-4-4h-2.500zM9 6c1 1 1 3 0 4M11 4c2 2 2 6 0 8M13 2c3 3 3 9 0 12" fill="none" stroke="#fff"/></svg>
    <svg class="kb" viewBox="0 0 23 14"><path d="M.5.500h22v13h-22z" fill="none" stroke="#fff"/><path d="M3 4h18M3 7h18" stroke="#fff" stroke-dasharray="1 1.500"/><path d="M5 10.500h13" stroke="#fff"/></svg>
    <span class="ime">A</span>
    <svg class="i16"><use href="#sogou"/></svg>
    <div class="clock">21:44<br>2017/9/22</div>
    <button class="note" aria-label="操作中心"><svg class="i22" viewBox="0 0 22 22"><path d="M2 3h16v13h-11l-3 3v-3h-2z" fill="#fff"/><path d="M5 6.500h10M5 9.500h10M5 12.500h8" stroke="#000"/></svg><b>20</b></button>
  </div>
</div>

<div class="imebar">
  <svg class="s" viewBox="0 0 28 28"><use href="#sogou"/></svg>
  <svg class="i16" viewBox="0 0 16 16"><path d="M2 15l5-13h2l5 13M4.500 10.500h7" fill="none" stroke="#1f72c6" stroke-width="2.200"/></svg>
  <svg class="i16" viewBox="0 0 16 16"><circle cx="5" cy="4" r="2" fill="#1f72c6"/><path d="M11 8c2 1 2 3 0 5" fill="none" stroke="#1f72c6" stroke-width="2"/></svg>
  <svg class="i16" viewBox="0 0 16 16"><rect x="5" width="6" height="10" rx="3" fill="#1f72c6"/><path d="M2.500 6.500c0 7 11 7 11 0M8 12v3M5 15.500h6" fill="none" stroke="#1f72c6" stroke-width="1.500"/></svg>
  <svg class="i16" viewBox="0 0 16 16"><rect y="2" width="16" height="12" rx="1" fill="#1f72c6"/><path d="M2 5.500h12M2 8h12" stroke="#fff" stroke-width="1.500" stroke-dasharray="1.500 1"/><path d="M4 11.500h8" stroke="#fff"/></svg>
  <svg class="i16" viewBox="0 0 16 16"><circle cx="6" cy="4" r="3" fill="#b4bdd6"/><path d="M0 12c0-6 10-6 11-2h-4v5h-4z" fill="#b4bdd6"/><text x="7" y="15" font-family="Open Sans" font-size="8" font-weight="700" fill="#8d9dc0">17</text></svg>
  <svg class="i16" viewBox="0 0 16 16"><path d="M1 3l4-2c1 2 5 2 6 0l4 2v4h-3v8h-8v-8h-3z" fill="#1f72c6"/></svg>
  <svg class="i16" viewBox="0 0 16 16"><path d="M2 14l7-7" stroke="#1f72c6" stroke-width="3.500" stroke-linecap="round"/><path d="M8 5c0-3 3-5 5-4l-2 3 1 2 3-1c0 3-3 5-6 4z" fill="#1f72c6"/></svg>
</div>
<div class="ball">72</div>
<svg class="mark mark-value" viewBox="0 0 156 294"><ellipse cx="78" cy="147" rx="73" ry="143" fill="none" stroke="#f00" stroke-width="7"/></svg>
<svg class="mark mark-item" viewBox="0 0 168 80"><ellipse cx="84" cy="40" rx="80" ry="35" fill="none" stroke="#f00" stroke-width="7"/></svg>
</body>
</html>
```
FILE: styles.css
```css
* { box-sizing: border-box; }
body {
  margin: 0; height: 100vh; display: flex; flex-direction: column; overflow: hidden;
  position: relative; background: #f0f0f0; color: #000;
  font: 12px/16px "Noto Sans", "Noto Sans CJK SC", sans-serif;
}
button, input, select { font: inherit; color: inherit; border: 0; padding: 0; margin: 0; background: none; border-radius: 0; }
h1, h2, ul { margin: 0; padding: 0; font: inherit; list-style: none; }
svg { display: block; flex: none; }
.defs { position: absolute; width: 0; height: 0; }
.i12 { width: 12px; height: 12px; }
.i16 { width: 16px; height: 16px; }
.i22 { width: 22px; height: 22px; }

.titlebar { flex: none; height: 23px; display: flex; align-items: center; gap: 5px; padding: 0 19px 0 2px; background: #fff; }
.titlebar h1 { flex: 1; white-space: nowrap; }
.winbtns { display: flex; gap: 34px; }
.winbtns button { width: 12px; }

.band { display: flex; align-items: center; background: linear-gradient(#fcfcfc, #f1f1f1); border-radius: 3px; }
.tool { display: flex; align-items: center; gap: 4px; white-space: nowrap; }
.off { color: #777; }
.dd { width: 5px; height: 3px; background: currentColor; clip-path: polygon(0 0, 100% 0, 50% 100%); }
.dd.wide { margin: 0 3px; }
.dd.gapped { margin-left: 3px; }
.sep { width: 1px; height: 16px; background: #b4b4b4; }
.more { align-self: flex-start; margin-left: auto; font-size: 14px; font-weight: 600; line-height: 14px; }

.menubar { flex: none; height: 31px; display: flex; gap: 3px; align-items: stretch; }
.menus { flex: none; display: flex; align-items: center; gap: 11px; width: 934px; padding-left: 7px; padding-bottom: 1px; white-space: nowrap; }
.tip { width: 185px; justify-content: center; margin-top: 1px; }
.tip a { color: #2f6b00; text-decoration: none; }
.account { flex: 1; gap: 9px; padding: 0 3px 0 5px; margin-top: 1px; }

.toolrow { flex: none; height: 30px; display: flex; gap: 3px; padding-bottom: 3px; }
.quick { width: 150px; padding: 0 1px 0 4px; gap: 7px; }
.maintools { flex: 1; padding: 0 3px 0 4px; gap: 7px; }
.view3d { height: 24px; padding: 0 3px; margin-left: 46px; border: 1px solid #777; }

.work { flex: 1; min-height: 0; display: flex; gap: 6px; }
.modules { width: 165px; display: flex; flex-direction: column; padding-bottom: 3px; }
.modules h2 { height: 16px; margin-bottom: 1px; display: flex; align-items: center; gap: 8px; padding-right: 1px; background: #0054e3; color: #fff; font-size: 13px; }
.modules h2 span { flex: 1; }
.modules h2 button { width: 17px; height: 14px; display: grid; place-items: center; border: 1px solid #06246e; border-top-color: #fff; border-left-color: #fff; }
.section { flex: none; height: 22px; border: 1px solid #a6a6a6; background: #f0f0f0; }
.expand { flex: none; height: 27px; margin: 0 1px; display: flex; align-items: center; gap: 7px; padding-left: 6px; border: 1px solid #aaa; border-bottom: 0; background: linear-gradient(#fff, #ececec); }
.treebox { flex: 1; min-height: 0; margin: 0 1px 1px; display: grid; grid-template: minmax(0, 1fr) 18px / minmax(0, 1fr) 16px; border: 1px solid #828790; background: #fff; padding: 1px 1px 1px 0; }
.vbar { display: flex; flex-direction: column; background: #f0f0f0; }
.vbar i { width: 16px; height: 250px; margin-top: auto; margin-bottom: 17px; background: #cdcdcd; }
.hbar { display: flex; align-items: center; gap: 2px; margin-left: 2px; background: #f0f0f0; }
.hbar i { width: 102px; height: 16px; background: #cdcdcd; }

.tree { overflow: hidden; font-family: "Liberation Serif", "Noto Sans CJK SC", serif; white-space: nowrap; }
.tree li { height: 16px; display: flex; align-items: center; background-repeat: no-repeat; }
.tree .leaf span { height: 16px; display: flex; align-items: center; gap: 4px; padding-right: 3px; }
.tree .c { width: 12px; height: 16px; }
.tree .dir, .tree .root { gap: 5px; }
.tree li {
  --v: repeating-linear-gradient(#808080 0 1px, transparent 1px 2px);
  --h: repeating-linear-gradient(90deg, #808080 0 1px, transparent 1px 2px);
}
.mod .dir { padding-left: 6px; background-image: var(--h); background-position: 20px 8px; background-size: 3px 1px; }
.mod .leaf { padding-left: 43px; background-image: var(--v), var(--v), var(--h); background-position: 12px 0, 31px 0, 32px 8px; background-size: 1px 100%, 1px 100%, 10px 1px; }
.mod .end { background-size: 1px 100%, 1px 8px, 10px 1px; }
.mod .last { background-size: 0 0, 1px 100%, 10px 1px; }
.mod .current { background: #d9d9d9; }

.status { flex: none; height: 20px; display: grid; grid-template-columns: 148px 78px 98px 48px 1fr 70px; gap: 2px; font-family: "Liberation Serif", "Noto Sans CJK SC", serif; }
.status span { border: 1px solid #d0d0d0; background: linear-gradient(#fff, #f0f0f0); line-height: 18px; padding-left: 1px; white-space: nowrap; overflow: hidden; }

main { flex: 1; min-width: 0; display: flex; flex-direction: column; }
.edittools { flex: none; height: 27px; gap: 7px; padding-left: 4px; }
.edittools .sep { margin: 0 -1px; }
.edittools label { margin-left: -4px; }
.edittools select { appearance: none; width: 62px; height: 20px; margin-right: -3px; padding-left: 2px; background: linear-gradient(45deg, transparent 50%, #000 50%) 52px 9px / 3px 3px no-repeat, linear-gradient(315deg, transparent 50%, #000 50%) 55px 9px / 3px 3px no-repeat, #fff; }
.panes { flex: 1; min-height: 0; display: flex; gap: 5px; }
.components { width: 184px; margin: 3px 0 3px; display: flex; flex-direction: column; }
.search { flex: none; height: 28px; display: flex; align-items: center; gap: 4px; padding-left: 1px; background: #fff; border-right: 1px solid #828790; }
.search input { width: 157px; height: 24px; padding: 0 2px 1px; border: 1px solid #6e6e6e; font-family: "Liberation Serif", "Noto Sans CJK SC", serif; }
.search input::placeholder { color: #777; opacity: 1; }
.comp { flex: 1; padding-top: 1px; border: 1px solid #828790; background: #fff; }
.comp .root { padding-left: 5px; background-image: var(--h); background-position: 19px 8px; background-size: 4px 1px; }
.comp .root .c { margin-right: 2px; }
.comp .dir { padding-left: 24px; background-image: var(--h); background-position: 38px 8px; background-size: 5px 1px; }
.comp .bare { background-image: var(--h), var(--v); background-position: 32px 8px, 31px 0; background-size: 11px 1px, 1px 100%; }
.comp .leaf { padding-left: 59px; background-image: var(--v), var(--v), var(--h); background-position: 31px 0, 50px 0, 51px 8px; background-size: 1px 100%, 1px 100%, 8px 1px; }
.comp .leaf span { gap: 6px; padding-left: 1px; }
.comp .end { background-size: 1px 100%, 1px 8px, 8px 1px; }
.comp .last { background-size: 0 0, 1px 8px, 8px 1px; }
.comp .selected { background: #316ac5; }

.props { flex: 1; min-width: 0; display: flex; flex-direction: column; padding: 1px 1px 2px 0; }
.tab { align-self: flex-start; width: 62px; height: 21px; background: #fff; border: 1px solid #dcdcdc; border-bottom: 0; }
.sheet { flex: 1; min-height: 0; padding: 2px 3px 3px 1px; background: #fff; border: 1px solid #dcdcdc; }
.inner { height: 100%; border: 1px solid #a5aaa8; padding-top: 1px; }
table { width: 370px; table-layout: fixed; border-collapse: separate; border-spacing: 0; font-family: "Liberation Serif", "Noto Sans CJK SC", serif; }
.cn { width: 22px; } .ca { width: 191px; } .cv { width: 126px; } .cx { width: 31px; }
th, td { height: 19px; padding: 0; border-right: 1px solid #b8b8b8; border-bottom: 1px solid #b8b8b8; font-weight: 400; line-height: 16px; overflow: hidden; }
thead th { height: 23px; background: linear-gradient(#fdfdfd, #eee); }
thead .hot { background: linear-gradient(#f8d594, #edb85d); color: #600050; }
tbody th { background: linear-gradient(90deg, #f8f8f8, #ededed); font-family: "Noto Sans", sans-serif; }
td { padding-left: 2px; }
.name { padding-left: 20px; }
.key { color: #00f; }
.active th { background: #fdce82; color: #600050; }
.active td:nth-child(3) { background: #d9eaf9; }
.active .name { background: #0078d7; color: #fff; }
.ck { padding: 0; }
.ck input { appearance: none; display: block; width: 13px; height: 13px; margin: 0 auto; border: 1px solid #222; background: #fff; }
.rebar { display: inline-block; width: 10px; height: 10px; margin: 0 1px 0 2px; }
.group { padding-left: 2px; color: #808080; }
.group button { display: inline-block; width: 13px; height: 13px; margin-right: 5px; border: 1px solid #aaa; vertical-align: text-bottom; }

.taskbar { flex: none; height: 40px; display: flex; background: #000b0e; color: #fff; }
.start { width: 48px; display: grid; place-items: center; background: #000; }
.cortana { flex: none; width: 344px; display: flex; align-items: center; gap: 5px; padding: 0 13px 0 9px; background: #333; }
.cortana input { flex: 1; font-size: 14px; }
.cortana input::placeholder { color: #999; opacity: 1; }
.apps { display: flex; gap: 3px; padding-left: 5px; }
.apps button { width: 46px; display: grid; place-items: center; border-bottom: 2px solid transparent; }
.apps svg { width: 24px; height: 24px; }
.apps .run { border-color: #76b9ed; }
.apps .on { background: #333f42; }
.tray { margin-left: auto; display: flex; align-items: center; gap: 8px; }
.cpu, .clock { text-align: center; line-height: 18px; }
.cpu { margin-right: 12px; }
.kb { width: 23px; height: 14px; }
.ime { font-size: 16px; font-weight: 600; padding: 0 5px; }
.clock { margin-left: 8px; }
.note { position: relative; align-self: stretch; width: 52px; padding-left: 10px; background: #000; }
.note b { position: absolute; left: 15px; bottom: 5px; width: 22px; height: 17px; border: 1px solid #888; border-radius: 9px; background: #333; font-weight: 600; line-height: 15px; }

.imebar { position: absolute; left: 588px; top: 44px; width: 185px; height: 24px; display: flex; align-items: center; gap: 6px; padding-right: 4px; background: linear-gradient(90deg, transparent 19px, #fff 19px); border: 1px solid #a9c3da; border-left: 0; }
.imebar .s { width: 28px; height: 28px; }
.ball { position: absolute; left: 1114px; top: -26px; width: 45px; height: 45px; padding-top: 24px; text-align: center; color: #fff; font-weight: 600; background: #3cc760; border: 2px solid #d5d5d5; border-radius: 50%; box-shadow: inset 0 0 0 1px #16944a, 0 1px 4px #666; }
.mark { position: absolute; pointer-events: none; }
.mark-value { left: 523px; top: 106px; width: 156px; height: 294px; }
.mark-item { left: 156px; top: 557px; width: 168px; height: 80px; }
```
